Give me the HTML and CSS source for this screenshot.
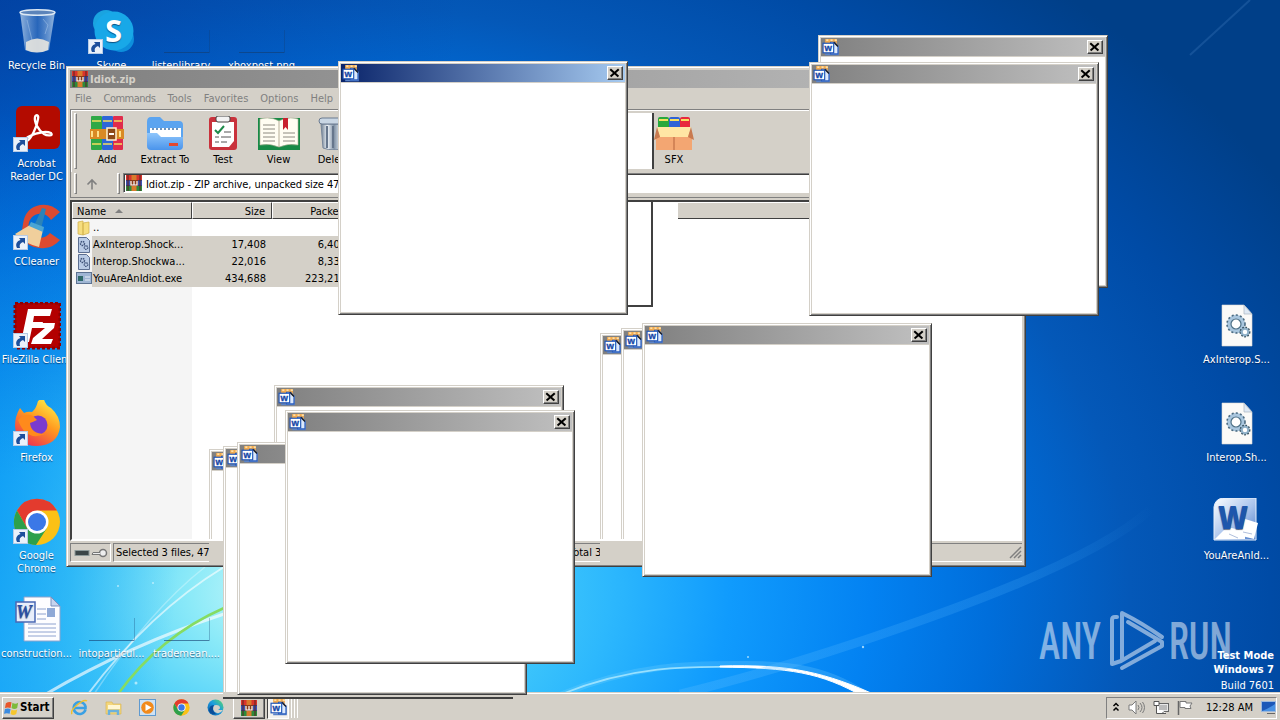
FILE: index.html
```html
<!DOCTYPE html>
<html lang="en">
<head>
    <meta charset="UTF-8">
    <meta name="viewport" content="width=device-width, initial-scale=1.0">
    <title>Desktop</title>
    <link rel="stylesheet" href="styles.css">
</head>
<body>
    <!-- shared icons -->
    <svg class="defs" width="0" height="0">
        <defs>
            <linearGradient id="bin" x1="0" x2="1"><stop offset="0" stop-color="#c4daf0" stop-opacity=".75"/><stop offset=".5" stop-color="#4f86cc" stop-opacity=".5"/><stop offset="1" stop-color="#b9d2ec" stop-opacity=".8"/></linearGradient>
            <linearGradient id="pipe" x1="0" x2="1"><stop offset="0" stop-color="#6f7f92"/><stop offset=".25" stop-color="#eef3f8"/><stop offset=".5" stop-color="#7f90a4"/><stop offset=".75" stop-color="#e2eaf2"/><stop offset="1" stop-color="#6a788a"/></linearGradient>
            <linearGradient id="folder" x1="0" x2="0" y1="0" y2="1"><stop offset="0" stop-color="#8fc6fb"/><stop offset="1" stop-color="#4a94ec"/></linearGradient>
            <linearGradient id="fox" x1=".8" x2=".2" y1="0" y2="1"><stop offset="0" stop-color="#fff14a"/><stop offset=".45" stop-color="#ff9a1f"/><stop offset="1" stop-color="#ec2a55"/></linearGradient>
            <linearGradient id="edge" x1="0" x2="1" y1="1" y2="0"><stop offset="0" stop-color="#0c59a4"/><stop offset=".55" stop-color="#1b9de0"/><stop offset="1" stop-color="#5fdc62"/></linearGradient>
            <linearGradient id="word" x1="0" x2="1" y1="0" y2="1"><stop offset="0" stop-color="#fdfeff"/><stop offset=".55" stop-color="#a9c3ec"/><stop offset="1" stop-color="#4d7cc8"/></linearGradient>
        </defs>
        <symbol id="i-popup" viewBox="0 0 16 16">
            <rect x="3" y="0" width="11" height="8" fill="#f3ab4e"/>
            <path d="M4 1h2M8 1h2M12 1h2" stroke="#fff1c9" stroke-width="1.2"/>
            <path d="M3 14.5h12V6" fill="none" stroke="#5b84c8" stroke-width="1.6"/>
            <path d="M8 3h4l3 4v7H8z" fill="#dce9fb" stroke="#2b5fc0"/>
            <path d="M11 3l4 4" stroke="#1c1c1c" stroke-width="1.2"/>
            <rect x="1" y="4" width="10" height="9" fill="#fff" stroke="#1f55b8" stroke-width="1.1"/>
            <text x="2.3" y="11.2" font-family="Liberation Sans" font-size="9" font-weight="700" fill="#1447a8" stroke="#1447a8" stroke-width=".3">w</text>
        </symbol>
        <symbol id="i-rar" viewBox="0 0 16 16">
            <rect width="16" height="16" fill="#3c2a3c"/>
            <rect y="0" width="16" height="5" fill="#d8342c"/><rect y="5.5" width="16" height="5" fill="#3b53b4"/><rect y="11" width="16" height="5" fill="#2d8a3c"/>
            <rect x="5.5" width="5" height="16" fill="#d87b2c"/>
            <path d="M2 0v16M14 0v16" stroke="#5b2020" stroke-width="1"/>
            <rect x="4" y="5" width="8" height="6" fill="#8a3b18"/>
            <path d="M5 6v4h6V6M8 6v4" fill="none" stroke="#fff" stroke-width="1.2"/>
        </symbol>
        <symbol id="i-arrow" viewBox="0 0 15 15">
            <rect x=".5" y=".5" width="14" height="14" fill="#eaf1fa" stroke="#b6cbe6"/>
            <path d="M4 13c-2-4 0-7 3.500-8L6 3h6v6l-2-2c-3 1-4 3-3 6z" fill="#1d4f9c"/>
        </symbol>
        <symbol id="i-gears" viewBox="0 0 48 48">
            <path d="M9 3h22l8 9v32H9z" fill="#fbfaf8" stroke="#dcd9d4" stroke-width=".6"/>
            <path d="M31 3v9h8z" fill="#dfe9f4" stroke="#a9b4c0" stroke-width=".7"/>
            <circle cx="23" cy="22" r="7" fill="none" stroke="#a9c6de" stroke-width="4.500"/>
            <circle cx="23" cy="22" r="9" fill="none" stroke="#4b6a80" stroke-width="1.600" stroke-dasharray="2 2.200"/>
            <circle cx="23" cy="22" r="5" fill="#fff" stroke="#4f7288" stroke-width="1.200"/>
            <circle cx="32" cy="30" r="3.500" fill="#fff" stroke="#8fb0c8" stroke-width="2.500"/>
            <circle cx="32" cy="30" r="4.800" fill="none" stroke="#36505f" stroke-width="1.300" stroke-dasharray="1.700 1.500"/>
        </symbol>
        <symbol id="i-chrome" viewBox="0 0 48 48">
            <circle cx="24" cy="24" r="23" fill="#fbc116"/>
            <path d="M4 12.500A23 23 0 0 1 44 12.500H24L14 30z" fill="#e33b2e"/>
            <path d="M4 12.500A23 23 0 0 0 23 47l11-17-10 5-10-5z" fill="#2da04c"/>
            <circle cx="24" cy="24" r="11.500" fill="#fff"/><circle cx="24" cy="24" r="9" fill="#3b78e7"/>
        </symbol>
        <symbol id="i-gearfile" viewBox="0 0 16 16">
            <path d="M2.500 .5h8l3 3v12h-11z" fill="#b9cbe6" stroke="#5c6f92"/>
            <circle cx="6.500" cy="6.500" r="2" fill="none" stroke="#3d5178" stroke-width="1.400" stroke-dasharray="1.500 .7"/>
            <circle cx="10" cy="10.500" r="1.800" fill="none" stroke="#3d5178" stroke-width="1.300" stroke-dasharray="1.300 .7"/>
        </symbol>
    </svg>

    <div class="desktop">
        <svg class="wallpaper" width="1280" height="720" viewBox="0 0 1280 720">
            <defs>
                <linearGradient id="ray" gradientUnits="userSpaceOnUse" x1="680" y1="700" x2="1150" y2="500"><stop offset="0" stop-color="#5cbcff" stop-opacity=".3"/><stop offset=".7" stop-color="#4fb4ff" stop-opacity=".2"/><stop offset="1" stop-color="#4fb4ff" stop-opacity="0"/></linearGradient>
            </defs>
            <path d="M46 694Q130 645 224 614" fill="none" stroke="#fff" stroke-width="3" opacity=".65"/>
            <path d="M88 694Q150 612 224 567" fill="none" stroke="#fff" stroke-width="2" opacity=".6"/>
            <path d="M94 694Q150 610 205 567" fill="none" stroke="#fff" stroke-width="1.500" opacity=".3"/>
            <path d="M118 694Q160 636 224 608" fill="none" stroke="#86dc62" stroke-width="2.500"/>
            <path d="M560 695C640 662 700 664 745 664S830 668 873 699" fill="none" stroke="#8fdcff" stroke-width="6" opacity=".22"/>
            <path d="M562 694C640 662 705 667 745 667" fill="none" stroke="#a8e8ff" stroke-width="1.800" opacity=".85"/>
            <path d="M720 666C790 664 825 672 880 697L864 697C820 672 790 668 720 667z" fill="#fff" stroke="#fff" stroke-width="1"/>
            <path d="M680 694Q800 665 950 610T1150 510" fill="none" stroke="url(#ray)" stroke-width="9"/>
            <path d="M1190 55L1250 0" stroke="#8fc4ff" stroke-width="2" opacity=".14"/>
            <g fill="#d8f6ff" opacity=".7"><circle cx="118" cy="586" r="1"/><circle cx="136" cy="683" r="1.500"/><circle cx="153" cy="583" r="1"/><circle cx="863" cy="647" r="1.200"/><circle cx="748" cy="657" r="1"/></g>
        </svg>

        <div class="icons">
            <div class="icon c1 r1">
                <svg width="48" height="48" viewBox="0 0 48 48"><path d="M7 4l5 38q11 5 24 0l6-38z" fill="url(#bin)"/><path d="M13 34q11-7 23 0l-1 8q-11 5-22 0z" fill="#e8e6df" opacity=".9"/><ellipse cx="24.500" cy="4.500" rx="17.500" ry="2.800" fill="#5c84ba" stroke="#dce8f4" stroke-width="1.500"/><path d="M30 11l5 6-3 9M14 12l5 20" fill="none" stroke="#aac8ea" opacity=".5"/></svg>
                <span>Recycle Bin</span>
            </div>
            <div class="icon c1 r2">
                <svg width="48" height="48" viewBox="0 0 48 48"><rect x="3" y="0" width="44" height="43" rx="6" fill="#b30b00"/><path d="M11 35c3-6 20-11 27-8 3 3-4 3-7 1-6-4-10-12-9-17 1-3 4-2 3 2-1 8-7 20-11 22-2 1-4 1-3 0z" fill="none" stroke="#fff" stroke-width="2.300"/></svg>
                <svg class="link" width="15" height="15"><use href="#i-arrow"/></svg>
                <span>Acrobat<br>Reader DC</span>
            </div>
            <div class="icon c1 r3">
                <svg width="48" height="48" viewBox="0 0 48 48"><path d="M47 8Q38-1 27 1 12 4 10 20l-2 12q8 14 24 12 9-1 15-8l-10-7a12 12 0 1 1 1-13z" fill="#dc4a31"/><path d="M29 4l4 1-5 20-7-3z" fill="#2b83b8"/><path d="M17 21l13 5-4 17q-11-2-24-13z" fill="#f0cf9c"/><path d="M18 18l13 5-1 5-14-6z" fill="#4aa5d4"/></svg>
                <svg class="link" width="15" height="15"><use href="#i-arrow"/></svg>
                <span>CCleaner</span>
            </div>
            <div class="icon c1 r4">
                <svg width="48" height="48" viewBox="0 0 48 48"><rect x="2" y="1" width="45" height="45" fill="#b30000" stroke="#8f0000" stroke-width="3" stroke-dasharray="3 2"/><path d="M15 7h24l-2 7H21l-1 6h10l-2 6h-9l-3 14H8z" fill="#fff"/><path d="M25 21h17l-1 5-12 11h11l-2 5H18l2-6 12-10h-8z" fill="#fff"/></svg>
                <svg class="link" width="15" height="15"><use href="#i-arrow"/></svg>
                <span>FileZilla Client</span>
            </div>
            <div class="icon c1 r5">
                <svg width="48" height="48" viewBox="0 0 48 48"><path d="M7 8l4 5q4-2 8-1 4-3 6-11 4-3 6-2 1 6 7 9 9 8 9 19-2 18-23 19Q3 46 2 26 2 16 7 8z" fill="url(#fox)"/><circle cx="25" cy="25" r="9.500" fill="#7a3bd0"/><path d="M5 20q8-8 15-4l4 4q-4 2-7 3 1 11 15 11-19 8-27-14z" fill="#ff8a1c"/></svg>
                <svg class="link" width="15" height="15"><use href="#i-arrow"/></svg>
                <span>Firefox</span>
            </div>
            <div class="icon c1 r6">
                <svg width="48" height="48"><use href="#i-chrome"/></svg>
                <svg class="link" width="15" height="15"><use href="#i-arrow"/></svg>
                <span>Google<br>Chrome</span>
            </div>
            <div class="icon c1 r7">
                <svg width="48" height="48" viewBox="0 0 48 48"><path d="M11 1h27l9 9v35H11z" fill="#fdfdff" stroke="#8fa3cc"/><path d="M38 1v9h9z" fill="#c6d4ee" stroke="#7b8fbc"/><path d="M24 13h9M24 18h9M24 23h9M15 28h28M15 32h28M15 36h28M15 40h28" stroke="#8ea2cf"/><rect x="34" y="12" width="8" height="9" fill="#8fa9d6"/><rect x="3" y="6" width="19" height="20" fill="#e8eefb" stroke="#4a68b4" stroke-width="1.500"/><text x="3" y="22" font-family="Liberation Serif" font-size="18" font-weight="700" font-style="italic" fill="#2a4fa4">W</text></svg>
                <span>construction...</span>
            </div>
            <div class="icon c2 r1">
                <svg width="48" height="48" viewBox="0 0 48 48"><circle cx="18" cy="15" r="13" fill="#1aa4e0"/><circle cx="33" cy="31" r="13" fill="#0d8fdc"/><circle cx="26" cy="23" r="19.500" fill="#18a8e8"/><text x="17" y="34" font-family="Open Sans" font-size="31" font-weight="700" fill="#fff">S</text></svg>
                <svg class="link" width="15" height="15"><use href="#i-arrow"/></svg>
                <span>Skype</span>
            </div>
            <div class="icon c3 r1"><div class="blank"></div><span>listenlibrary....</span></div>
            <div class="icon c4 r1"><div class="blank"></div><span>xboxpost.png</span></div>
            <div class="icon c2 r7"><div class="blank"></div><span>intoparticul...</span></div>
            <div class="icon c3 r7"><div class="blank"></div><span>trademean....</span></div>
            <div class="icon c17 r4"><svg width="48" height="48"><use href="#i-gears"/></svg><span>AxInterop.S...</span></div>
            <div class="icon c17 r5"><svg width="48" height="48"><use href="#i-gears"/></svg><span>Interop.Sh...</span></div>
            <div class="icon c17 r6">
                <svg width="48" height="48" viewBox="0 0 48 48"><path d="M10 0h33v42H1V9Q2 1 10 0z" fill="url(#word)" stroke="#e8f0fc"/><path d="M2 41L14 29l18 4v8z" fill="#fff"/><path d="M29 20l16 5-4 16-16-4z" fill="#fff"/><path d="M30 34l9 2M16 36l9 4" stroke="#b0bfdc"/><text x="5" y="31" font-family="Open Sans" font-size="32" font-weight="800" fill="#1d56ac" textLength="30" lengthAdjust="spacingAndGlyphs">W</text></svg>
                <span>YouAreAnId...</span>
            </div>
        </div>

        <div class="watermark">
            <svg width="200" height="70" viewBox="0 0 200 70">
                <g fill="#fff" font-family="Roboto" font-size="52" opacity=".5">
                    <text x="4" y="52" textLength="62" lengthAdjust="spacingAndGlyphs">ANY</text>
                    <text x="134" y="52" textLength="63" lengthAdjust="spacingAndGlyphs">RUN</text>
                </g>
                <path d="M82 10h-2q-3 0-3 3v44l9-3 34-20M87 53V6q20 10 40 24M93 15l34 20v4L87 61" fill="none" stroke="#fff" stroke-width="4" stroke-linejoin="round" stroke-linecap="round" opacity=".5"/>
            </svg>
        </div>
        <div class="build"><b>Test Mode</b><b>Windows 7</b><span>Build 7601</span></div>

        <!-- WinRAR -->
        <div class="winrar">
            <div class="titlebar"><svg width="16" height="16"><use href="#i-rar"/></svg><b>Idiot.zip</b></div>
            <div class="menu"><span>File</span><span class="tight">Commands</span><span>Tools</span><span>Favorites</span><span>Options</span><span>Help</span></div>
            <div class="toolbar">
                <i class="grip"></i>
                <div class="tool">
                    <svg width="36" height="34" viewBox="0 0 36 34"><rect x="2" y="0" width="11" height="34" rx="1" fill="#2fa846"/><rect x="13" y="0" width="11" height="34" rx="1" fill="#2d66d8"/><rect x="24" y="0" width="10" height="34" rx="1" fill="#e02c4c"/><path d="M3 5h9M3 28h9M14 5h9M14 28h9M25 5h8M25 28h8" stroke="#f5dc5c" stroke-width="1.500"/><rect x="1" y="13" width="34" height="10" fill="#d98a24"/><path d="M3 15v6M9 15v6M31 15v6" stroke="#ffe08a" stroke-width="2"/><rect x="18" y="12" width="9" height="12" fill="#8d4a18" stroke="#fff3cf" stroke-width="1.500"/><path d="M20 18h5" stroke="#fff" stroke-width="2"/></svg>
                    <span>Add</span>
                </div>
                <div class="tool">
                    <svg width="38" height="34" viewBox="0 0 38 34"><path d="M1 6q0-5 4-5h9l4 4h15q4 0 4 4v21H1z" fill="#5ba4f0"/><rect x="4" y="12" width="31" height="14" fill="#fff"/><path d="M6 13h27" stroke="#6d93bd" stroke-width="2" stroke-dasharray="2 2"/><path d="M1 17h10l4 4h22v9q0 4-4 4H5q-4 0-4-4z" fill="url(#folder)"/><rect x="23" y="27" width="9" height="3" fill="#e3482e"/></svg>
                    <span>Extract To</span>
                </div>
                <div class="tool">
                    <svg width="28" height="34" viewBox="0 0 28 34"><rect x="0" y="1" width="28" height="33" rx="3" fill="#c9323c"/><path d="M3 6h22v19l-5 6H3z" fill="#fff"/><rect x="7" y="0" width="14" height="6" rx="2" fill="#f3f3f3" stroke="#444"/><path d="M6 14l3 3 6-7" fill="none" stroke="#1e8a4a" stroke-width="2"/><path d="M15 16h7M6 21h4M12 21h10M6 26h4M12 26h6" stroke="#555"/></svg>
                    <span>Test</span>
                </div>
                <div class="tool view">
                    <svg width="42" height="34" viewBox="0 0 42 34"><rect x="0" y="2" width="42" height="32" fill="#178a46"/><path d="M2 3q10-3 19 2v26q-9-4-19-2zM40 3Q30 0 21 5v26q9-4 19-2z" fill="#fffdf2" stroke="#b9b29a" stroke-width=".6"/><path d="M5 9h12M5 13h12M5 17h12M5 21h12M5 25h12M25 17h12M25 21h12M25 25h12" stroke="#8d8a80"/><path d="M25 2h5v12l-2.500-3-2.500 3z" fill="#c8202e"/></svg>
                    <span>View</span>
                </div>
                <div class="tool">
                    <svg width="32" height="34" viewBox="0 0 32 34"><path d="M3 8h26l-2 24q-11 4-22 0z" fill="url(#pipe)" stroke="#77869a"/><path d="M9 10v22M15 10v22M21 10v22" stroke="#66768c" stroke-width="2"/><rect x="1" y="2" width="30" height="6" rx="3" fill="#c9d6e4" stroke="#6a7a90"/></svg>
                    <span>Delete</span>
                </div>
                <div class="tool sfx">
                    <svg width="40" height="34" viewBox="0 0 40 34"><rect x="4" y="1" width="11" height="14" rx="2" fill="#28a83c"/><rect x="15" y="1" width="11" height="14" rx="2" fill="#2f62d6"/><rect x="26" y="1" width="10" height="14" rx="2" fill="#e8283c"/><path d="M5 4h9M16 4h9M27 4h8" stroke="#f6e060" stroke-width="2"/><path d="M2 16h36v18H2z" fill="#f3a672"/><path d="M3 11h34l-3 10H6z" fill="#ffe6a4"/><path d="M3 11l3 10-6 3zM37 11l-3 10 6 3z" fill="#c97a4f"/><path d="M20 21v13" stroke="#b5653c"/></svg>
                    <span>SFX</span>
                </div>
                <div class="trail-top"></div>
            </div>
            <div class="address">
                <i class="grip"></i>
                <svg class="up" width="14" height="12" viewBox="0 0 14 12"><path d="M7 11.500V2M2.500 6.500L7 2l4.500 4.500" fill="none" stroke="#808080" stroke-width="1.600"/></svg>
                <i class="grip"></i>
                <div class="path"><svg width="16" height="16"><use href="#i-rar"/></svg><span>Idiot.zip - ZIP archive, unpacked size 474,112 bytes</span></div>
            </div>
            <div class="list">
                <div class="head">
                    <div class="name">Name<i></i></div><div class="num">Size</div><div class="num">Packed</div><div class="rest"></div>
                </div>
                <div class="row"><div class="name"><svg width="16" height="16" viewBox="0 0 16 16"><path d="M2 2l5-1v14l-5-1zM7 3l6-1v11l-6 2z" fill="#f6dd7e" stroke="#cfae48" stroke-width=".7"/></svg><span>..</span></div></div>
                <div class="row selected"><div class="name"><svg width="16" height="16"><use href="#i-gearfile"/></svg><span>AxInterop.Shock...</span></div><div class="num">17,408</div><div class="num">6,401</div></div>
                <div class="row selected"><div class="name"><svg width="16" height="16"><use href="#i-gearfile"/></svg><span>Interop.Shockwa...</span></div><div class="num">22,016</div><div class="num">8,336</div></div>
                <div class="row selected"><div class="name"><svg width="16" height="16" viewBox="0 0 16 16"><rect x=".5" y="1.500" width="15" height="11" fill="#9fb6d4" stroke="#5d7392"/><rect x="2" y="5" width="5" height="5" fill="#2f6a6a"/><path d="M9 6h5M9 9h5" stroke="#e8eef6"/></svg><span>YouAreAnIdiot.exe</span></div><div class="num">434,688</div><div class="num">223,218</div></div>
                <div class="trail-list"></div>
                <div class="popup p-600"><div class="bar"><svg width="17" height="17"><use href="#i-popup"/></svg></div><div class="client"></div></div>
                <div class="popup p-621"><div class="bar"><svg width="17" height="17"><use href="#i-popup"/></svg></div><div class="client"></div></div>
                <div class="popup p-209"><div class="bar"><svg width="17" height="17"><use href="#i-popup"/></svg></div><div class="client"></div></div>
            </div>
            <div class="status">
                <div class="panel keys"><svg width="36" height="14" viewBox="0 0 36 14"><rect x="2" y="4.500" width="14" height="5" fill="#3c4648" stroke="#8e9a9a"/><circle cx="30" cy="7" r="3.500" fill="#eee" stroke="#777" stroke-width="1.500"/><path d="M27 6.500h-7l-1 2h8" fill="#eee" stroke="#777"/></svg></div>
                <div class="panel sel">Selected 3 files, 474,112 bytes</div>
                <div class="panel total">Total 3 files</div>
                <div class="panel last"><svg width="13" height="13" viewBox="0 0 13 13"><path d="M1 12L12 1M5 12l7-7M9 12l3-3" stroke="#808080" stroke-width="1.500"/></svg></div>
            </div>
        </div>

        <div class="popup p-223"><div class="bar"><svg width="17" height="17"><use href="#i-popup"/></svg></div><div class="client"></div></div>
        <div class="popup p-274"><div class="bar"><svg width="17" height="17"><use href="#i-popup"/></svg><button class="close"></button></div><div class="client"></div></div>

        <div class="taskbar">
            <div class="start">
                <svg width="16" height="16" viewBox="0 0 17 16"><path d="M2 3q3-2 6-1L7 8Q4 7 1 8z" fill="#e8562a"/><path d="M9 2.500q3 2 6 0L14 8q-3 2-6 0z" fill="#7dba3a"/><path d="M1 9q3-1 6 0l-1 5q-3-1-6 0z" fill="#3b8be0"/><path d="M8 9.500q3 2 6 0l-1 5q-3 2-6 0z" fill="#f6c62c"/></svg>
                <b>Start</b>
            </div>
            <div class="quick">
                <svg width="17" height="17" viewBox="0 0 17 17"><path d="M14.500 10.500A6 6 0 1 1 14.500 7.500M3 9h11.500V7" fill="none" stroke="#3aa0e4" stroke-width="2.600"/><path d="M1 15Q-1 12 6 6T16 2" fill="none" stroke="#f0c02c" stroke-width="1.500"/></svg>
                <svg width="17" height="17" viewBox="0 0 17 17"><path d="M1 3h6l1 2h8v10H1z" fill="#f3d67c" stroke="#d8b24c" stroke-width=".6"/><path d="M3 6h12v4H3z" fill="#fff6d2"/><path d="M4 16v-4h9v4" fill="none" stroke="#6bb1dc" stroke-width="2.500"/></svg>
                <svg width="17" height="17" viewBox="0 0 17 17"><rect x=".5" y=".5" width="16" height="16" fill="#cfe2f4" stroke="#5f9ad0"/><circle cx="8.500" cy="8.500" r="6.300" fill="#f28a1c"/><path d="M6.500 5l6 3.500-6 3.500z" fill="#fff"/></svg>
                <svg width="17" height="17"><use href="#i-chrome"/></svg>
                <svg width="17" height="17" viewBox="0 0 17 17"><circle cx="8.500" cy="8.500" r="8" fill="url(#edge)"/><path d="M6 9q0-3 3-3 4 0 4 3 0 1-2 2h5q-3 4-6 3-4-1-4-5z" fill="#d4d0c8"/><path d="M2 12q0-6 5-6-3 5 2 9-5 1-7-3z" fill="#0b4d98"/></svg>
            </div>
            <div class="task"><svg width="16" height="16"><use href="#i-rar"/></svg></div>
            <div class="task pressed"><svg width="17" height="17"><use href="#i-popup"/></svg></div>
            <i class="stripe"></i><i class="stripe"></i><i class="stripe"></i>
            <div class="tray">
                <svg width="8" height="12" viewBox="0 0 8 12"><path d="M1.500 4L4 1.500 6.500 4M1.500 8.500L4 6l2.500 2.500" fill="none" stroke="#000" stroke-width="1.500"/></svg>
                <svg width="17" height="15" viewBox="0 0 17 15"><path d="M1 5h3l4-4v13l-4-4H1z" fill="#fff" stroke="#7a7a7a"/><path d="M10 5q2 2.500 0 5M12 3q4 4.500 0 9M14.500 2q4 5.500 0 11" fill="none" stroke="#7a7a7a"/></svg>
                <svg width="16" height="15" viewBox="0 0 16 15"><rect x="4.500" y="3.500" width="11" height="8" fill="#e8e8e8" stroke="#666"/><path d="M1 1.500h5v4H1zM3.500 5v8.500H13M10 12v2" fill="#fff" stroke="#555"/><path d="M6 5h8v5H6z" fill="#bbb"/></svg>
                <svg width="16" height="15" viewBox="0 0 16 15"><path d="M1.500 1v14" stroke="#666" stroke-width="1.500"/><path d="M3 1.500h6v1.500h6l-2 3 1 2.500H8V7.500H3z" fill="#fff" stroke="#777"/></svg>
                <span>12:28 AM</span>
                <svg width="15" height="13" viewBox="0 0 15 13"><rect x=".5" y=".5" width="14" height="10" fill="#1c58b8" stroke="#9cb8dc"/><path d="M1 10Q7 8 14 3v7z" fill="#4a92e4"/><path d="M6 12.500h8" stroke="#666"/></svg>
            </div>
            <div class="trail-task"></div>
        </div>

        <div class="popup p-237"><div class="bar"><svg width="17" height="17"><use href="#i-popup"/></svg></div><div class="client"></div></div>
        <div class="popup p-285"><div class="bar"><svg width="17" height="17"><use href="#i-popup"/></svg><button class="close"></button></div><div class="client"></div></div>
        <div class="popup p-642"><div class="bar"><svg width="17" height="17"><use href="#i-popup"/></svg><button class="close"></button></div><div class="client"></div></div>
        <div class="popup p-818"><div class="bar"><svg width="17" height="17"><use href="#i-popup"/></svg><button class="close"></button></div><div class="client"></div></div>
        <div class="popup p-809"><div class="bar"><svg width="17" height="17"><use href="#i-popup"/></svg><button class="close"></button></div><div class="client"></div></div>
        <div class="popup active p-338"><div class="bar"><svg width="17" height="17"><use href="#i-popup"/></svg><button class="close"></button></div><div class="client"></div></div>
    </div>
</body>
</html>
```

FILE: styles.css
```css
:root {
    --face: #d4d0c8;
    --shadow: #808080;
    --dark: #404040;
}

* {
    box-sizing: border-box;
    margin: 0;
    padding: 0;
}

body {
    width: 1280px;
    height: 720px;
    overflow: hidden;
    font-family: "DejaVu Sans Condensed", "DejaVu Sans", sans-serif;
    font-stretch: condensed;
    font-size: 11px;
    line-height: 13px;
    color: #000;
}

svg {
    display: block;
    flex: none;
}

.icon svg,
.defs {
    font-stretch: normal;
}

.defs {
    position: absolute;
}

.desktop {
    position: relative;
    width: 1280px;
    height: 720px;
    overflow: hidden;
    background:
        radial-gradient(ellipse 520px 480px at -60px 0, rgba(0, 50, 150, .55), rgba(0, 70, 180, 0)),
        radial-gradient(ellipse 220px 420px at -40px 520px, rgba(0, 145, 240, .7), rgba(0, 160, 245, 0)),
        radial-gradient(ellipse 1000px 700px at 290px 590px, #d4fbfa 0, #8ceaf8 10%, #45ccfa 22%, #2db8fd 32%, #109bfd 44%, #0382f2 58%, #006edb 70%, #0458b8 84%, #004ba6 98%, #003f88 115%);
}

.wallpaper {
    position: absolute;
    inset: 0;
}

/* desktop icon grid */
.icons {
    position: absolute;
    left: -1px;
    top: 8px;
    display: grid;
    grid-template-columns: repeat(17, 75px);
    grid-template-rows: repeat(7, 98px);
}

.icon {
    position: relative;
    display: flex;
    flex-direction: column;
    align-items: center;
    color: #fff;
    text-align: center;
    white-space: nowrap;
    text-shadow: 0 1px 1px rgba(0, 20, 60, .6);
}

.icon span {
    margin-top: 3px;
}

.icon .link {
    position: absolute;
    left: 14px;
    top: 31px;
}

.blank {
    width: 46px;
    height: 45px;
    margin-bottom: 3px;
    border-right: 1px solid rgba(20, 60, 110, .6);
    border-bottom: 1px solid rgba(20, 60, 110, .6);
    clip-path: inset(22px 0 0 0);
}

.c1 { grid-column: 1; }
.c2 { grid-column: 2; }
.c3 { grid-column: 3; }
.c4 { grid-column: 4; }
.c17 { grid-column: 17; }
.r1 { grid-row: 1; }
.r2 { grid-row: 2; }
.r3 { grid-row: 3; }
.r4 { grid-row: 4; }
.r5 { grid-row: 5; }
.r6 { grid-row: 6; }
.r7 { grid-row: 7; }

.watermark {
    position: absolute;
    left: 1035px;
    top: 607px;
    font-weight: 500;
}

.build {
    position: absolute;
    right: 6px;
    top: 649px;
    display: flex;
    flex-direction: column;
    align-items: flex-end;
    line-height: 15px;
    color: #fff;
}

.build b {
    line-height: 14px;
}

.build span {
    margin-top: 1px;
}

/* WinRAR window */
.winrar {
    position: absolute;
    left: 66px;
    top: 66px;
    width: 960px;
    height: 501px;
    display: flex;
    flex-direction: column;
    background: var(--face);
    border: 1px solid;
    border-color: var(--face) var(--dark) var(--dark) var(--face);
    box-shadow: inset 1px 1px #fff, inset -1px -1px var(--shadow);
    padding: 3px;
}

.winrar .titlebar {
    display: flex;
    align-items: center;
    gap: 2px;
    height: 18px;
    padding-left: 2px;
    color: #d4d0c8;
    background: linear-gradient(to right, #808080, #c0c0c0);
}

.menu {
    display: flex;
    align-items: center;
    gap: 12px;
    height: 21px;
    padding-left: 5px;
    color: #808080;
}

.menu .tight {
    letter-spacing: -.5px;
}

.toolbar {
    position: relative;
    display: flex;
    height: 63px;
    padding: 3px 0 0 3px;
    border-top: 1px solid var(--shadow);
    border-left: 1px solid var(--shadow);
    box-shadow: inset 1px 1px #fff;
}

.grip {
    flex: none;
    width: 3px;
    height: 56px;
    border: 1px solid;
    border-color: #fff var(--shadow) var(--shadow) #fff;
}

.tool {
    flex: none;
    display: flex;
    flex-direction: column;
    align-items: center;
    gap: 3px;
    width: 58px;
    padding-top: 3px;
    white-space: nowrap;
}

.grip + .tool {
    margin-left: 1px;
}

.view {
    width: 53px;
}

.sfx {
    width: 40px;
    margin-left: 291px;
}

/* leftovers painted by a dragged popup */
.trail-top {
    position: absolute;
    left: 540px;
    top: 3px;
    width: 43px;
    height: 56px;
    background: #fff;
    border-right: 2px solid var(--dark);
}

.trail-list {
    position: absolute;
    left: 540px;
    top: 0;
    width: 41px;
    height: 105px;
    background: #fff;
    border: solid var(--dark);
    border-width: 0 2px 2px 0;
}

.trail-list::after {
    content: "";
    position: absolute;
    left: 41px;
    top: 0;
    width: 25px;
    height: 18px;
    background: #fff;
}

.address {
    display: flex;
    height: 26px;
    padding: 1px 0 4px 3px;
    border-left: 1px solid var(--shadow);
    border-bottom: 1px solid var(--shadow);
}

.address .grip {
    height: 21px;
}

.up {
    margin: 5px 18px 0 8px;
}

.path {
    display: flex;
    flex: 1;
    align-items: center;
    gap: 4px;
    margin-left: 3px;
    padding-left: 2px;
    background: #fff;
    border: 1px solid;
    border-color: var(--shadow) #fff #fff var(--shadow);
    box-shadow: inset 1px 1px var(--dark);
}

.path span {
    padding-top: 2px;
    letter-spacing: -.08px;
}

.list {
    position: relative;
    flex: 1;
    margin: 2px 0 0;
    overflow: hidden;
    border: 2px solid;
    border-color: var(--dark) #fff #fff var(--dark);
    background: linear-gradient(to right, #f5f5f5 120px, #fff 120px);
}

.head {
    display: flex;
    height: 17px;
}

.head > div {
    display: flex;
    align-items: center;
    padding-top: 1px;
    background: var(--face);
    border: 1px solid;
    border-color: #fff var(--dark) var(--dark) #fff;
}

.head .num {
    justify-content: flex-end;
}

.head .rest {
    flex: 1;
    border-left: 0;
}

.name {
    flex: none;
    display: flex;
    align-items: center;
    width: 120px;
    padding-left: 4px;
}

.name i {
    margin-left: 9px;
    border: 4px solid transparent;
    border-top: 0;
    border-bottom-color: var(--shadow);
}

.num {
    flex: none;
    width: 80px;
    padding-right: 6px;
    text-align: right;
}

.row {
    display: flex;
    height: 17px;
    align-items: center;
}

.row > div {
    height: 17px;
    line-height: 18px;
}

.row .name span {
    flex: 1;
    height: 17px;
    padding-left: 1px;
}

.selected .name span,
.selected .num {
    background: var(--face);
}

.status {
    display: flex;
    height: 22px;
    padding: 2px 0 1px;
}

.panel {
    flex: none;
    display: flex;
    align-items: center;
    overflow: hidden;
    white-space: nowrap;
    border-top: 1px solid var(--shadow);
    border-bottom: 1px solid #fff;
    border-left: 1px solid var(--shadow);
    padding-left: 2px;
}

.keys {
    width: 41px;
    border-right: 1px solid #fff;
}

.sel {
    width: 96px;
    margin-left: 2px;
    letter-spacing: -.05px;
}

.total {
    width: 34px;
    margin-left: 357px;
}

.last {
    flex: 1;
    margin-left: 80px;
    justify-content: flex-end;
}

/* popups */
.popup {
    position: absolute;
    display: flex;
    flex-direction: column;
    width: 290px;
    height: 253px;
    padding: 2px;
    background: var(--face);
    border: 1px solid;
    border-color: var(--face) var(--dark) var(--dark) var(--face);
    box-shadow: inset 1px 1px #fff, inset -1px -1px var(--shadow);
}

.bar {
    flex: none;
    display: flex;
    align-items: center;
    justify-content: space-between;
    height: 18px;
    margin-bottom: 1px;
    padding: 0 2px 0 1px;
    background: linear-gradient(to right, #808080, #c0c0c0);
}

.active .bar {
    background: linear-gradient(to right, #0a246a, #a6caf0);
}

.client {
    flex: 1;
    background: #fff;
}

.close {
    position: relative;
    width: 16px;
    height: 14px;
    background: var(--face);
    border: 1px solid;
    border-color: #fff var(--dark) var(--dark) #fff;
    box-shadow: inset -1px -1px var(--shadow);
}

.close::before,
.close::after {
    content: "";
    position: absolute;
    left: 1px;
    top: 5px;
    width: 11px;
    height: 1.5px;
    background: #000;
    transform: rotate(42deg);
}

.close::after {
    transform: rotate(-42deg);
}

.p-338 { left: 338px; top: 61px; height: 254px; }
.p-809 { left: 809px; top: 62px; height: 254px; }
.p-818 { left: 818px; top: 35px; }
.p-642 { left: 642px; top: 323px; height: 254px; }
.p-274 { left: 274px; top: 385px; }
.p-285 { left: 285px; top: 410px; height: 254px; }
.p-237 { left: 237px; top: 442px; }
.p-223 { left: 223px; top: 446px; }
/* inside the file list */
.p-600 { left: 528px; top: 131px; }
.p-621 { left: 549px; top: 126px; }
.p-209 { left: 137px; top: 247px; }

/* taskbar */
.taskbar {
    position: absolute;
    left: 0;
    bottom: 0;
    width: 1280px;
    height: 28px;
    display: flex;
    align-items: center;
    padding: 3px 3px 1px 2px;
    background: var(--face);
    border-top: 1px solid var(--face);
    box-shadow: inset 0 1px #fff;
}

.start {
    display: flex;
    align-items: center;
    width: 52px;
    height: 22px;
    padding-left: 1px;
    border: 1px solid;
    border-color: #fff var(--dark) var(--dark) #fff;
    box-shadow: inset -1px -1px var(--shadow);
}

.start b {
    font-size: 11.5px;
}

.quick {
    display: flex;
    gap: 17px;
    margin-left: 17px;
}

.task {
    display: flex;
    align-items: center;
    justify-content: center;
    width: 32px;
    height: 22px;
    margin-left: 9px;
    border: 1px solid;
    border-color: #fff var(--dark) var(--dark) #fff;
    box-shadow: inset -1px -1px var(--shadow);
}

.pressed {
    width: 22px;
    margin-left: 2px;
    background: #f3f1ed;
    border-color: var(--dark) #fff #fff var(--dark);
    box-shadow: none;
}

.stripe {
    width: 1px;
    height: 20px;
    margin-left: 2px;
    background: #fff;
}

.trail-task {
    position: absolute;
    left: 223px;
    top: 0;
    width: 290px;
    height: 6px;
    background: var(--face);
    border-bottom: 2px solid var(--dark);
}

.tray {
    display: flex;
    align-items: center;
    width: 171px;
    height: 22px;
    margin-left: auto;
    padding: 0 1px 0 5px;
    border: 1px solid;
    border-color: var(--shadow) #fff #fff var(--shadow);
    gap: 8px;
}

.tray span {
    margin-left: 5px;
    white-space: nowrap;
}
```
